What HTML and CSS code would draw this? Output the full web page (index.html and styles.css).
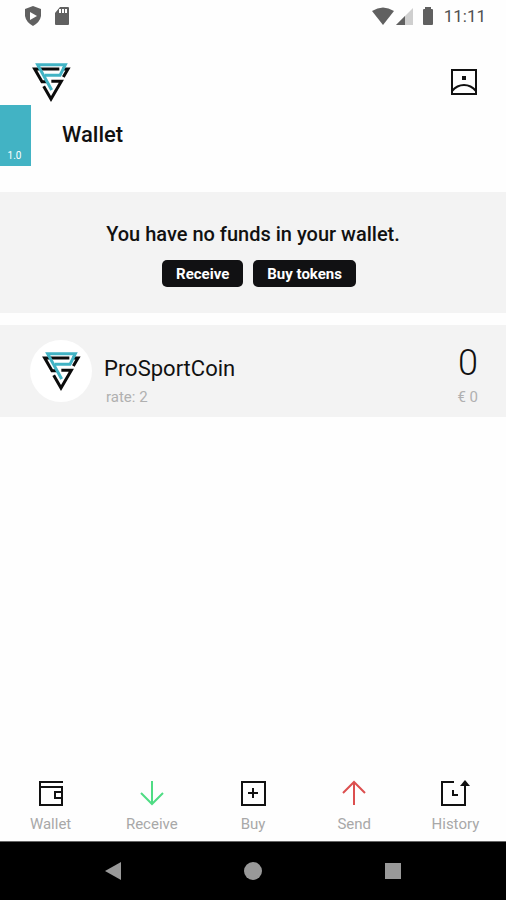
FILE: index.html
```html
<!DOCTYPE html>
<html lang="en">
<head>
  <meta charset="UTF-8">
  <meta name="viewport" content="width=device-width, initial-scale=1">
  <title>Wallet</title>
  <link rel="stylesheet" href="styles.css">
</head>
<body>
  <svg class="defs" aria-hidden="true">
    <symbol id="logo" viewBox="0 0 120 120">
      <g fill="none" stroke-width="9">
        <path stroke="#0b0b0b" d="M85 21H11L33 59H48M94 21H111L97 45M38 73L60 111L91 58H61"/>
        <path stroke="#42b3c4" d="M62 84L20 8H103L87 40H42"/>
      </g>
    </symbol>
  </svg>

  <div class="status-bar">
    <div class="status-icons left">
      <svg width="18" height="20" viewBox="0 0 18 20"><path fill="#606060" fill-rule="evenodd" d="M9 0L17 3V10Q16 16 9 20Q2 16 1 10V3ZM6 6V14L13 10Z"/></svg>
      <svg width="16" height="20" viewBox="0 0 16 20"><path fill="#606060" fill-rule="evenodd" d="M6 1H14Q15 1 15 2V18Q15 19 14 19H2Q1 19 1 18V7ZM5 3V7H7V3ZM8 3V7H10V3ZM11 3V7H13V3Z"/></svg>
    </div>
    <div class="status-icons right">
      <svg width="22" height="18" viewBox="0 0 22 18"><path fill="#606060" d="M0 4Q11 -3 22 4L11 18Z"/></svg>
      <svg width="17" height="18" viewBox="0 0 17 18"><path fill="#cfcfcf" d="M17 1V18H0Z"/><path fill="#606060" d="M9 9V18H0Z"/></svg>
      <svg class="battery" width="12" height="18" viewBox="0 0 12 18"><path fill="#606060" d="M3 0H9V2H10Q11 2 11 3V17Q11 18 10 18H2Q1 18 1 17V3Q1 2 2 2H3Z"/></svg>
      <span class="clock">11:11</span>
    </div>
  </div>

  <header>
    <svg class="logo"><use href="#logo"/></svg>
    <button class="profile-btn" aria-label="Profile">
      <svg width="26" height="26" viewBox="0 0 26 26"><g fill="none" stroke="#111" stroke-width="2"><path d="M1 1H25V25H1Z"/><path d="M1 22Q6 16 13 16T25 22"/></g><path fill="#111" d="M11 7H15V11H11Z"/></svg>
    </button>
  </header>

  <div class="title-row">
    <div class="version">1.0</div>
    <h1>Wallet</h1>
  </div>

  <main>
    <section class="notice">
      <h2>You have no funds in your wallet.</h2>
      <div class="notice-buttons">
        <button>Receive</button>
        <button>Buy tokens</button>
      </div>
    </section>

    <section class="coin">
      <div class="coin-logo"><svg class="logo"><use href="#logo"/></svg></div>
      <div class="coin-info">
        <div class="coin-name">ProSportCoin</div>
        <div class="coin-rate">rate: 2</div>
      </div>
      <div class="coin-balance">
        <div class="amount">0</div>
        <div class="fiat">€ 0</div>
      </div>
    </section>
  </main>

  <nav class="tabs">
    <a href="#wallet">
      <svg width="26" height="26" viewBox="0 0 26 26"><path fill="none" stroke="#111" stroke-width="2" d="M25 2H2V25H24V7H2M24 12H17V18H24"/></svg>
      Wallet
    </a>
    <a href="#receive">
      <svg width="26" height="26" viewBox="0 0 26 26"><path fill="none" stroke="#4fdc84" stroke-width="2" d="M13 1V24M2 13L13 24L24 13"/></svg>
      Receive
    </a>
    <a href="#buy">
      <svg width="26" height="26" viewBox="0 0 26 26"><path fill="none" stroke="#111" stroke-width="2" d="M2 2H25V25H2ZM13 8V18M8 13H18"/></svg>
      Buy
    </a>
    <a href="#send">
      <svg width="26" height="26" viewBox="0 0 26 26"><path fill="none" stroke="#dc4f4f" stroke-width="2" d="M13 25V2M2 13L13 2L24 13"/></svg>
      Send
    </a>
    <a href="#history">
      <svg width="30" height="26" viewBox="0 0 30 26"><path fill="none" stroke="#111" stroke-width="2" d="M14 2H2V25H25V4M13 10V15H18"/><path fill="#111" d="M25 0L30 6H20Z"/></svg>
      History
    </a>
  </nav>

  <div class="system-nav">
    <button aria-label="Back"><svg width="18" height="18" viewBox="0 0 18 18"><path fill="#999" d="M1 9L17 0V18Z"/></svg></button>
    <button aria-label="Home"><svg width="18" height="18" viewBox="0 0 18 18"><circle cx="9" cy="9" r="9" fill="#999"/></svg></button>
    <button aria-label="Overview"><svg width="18" height="18" viewBox="0 0 18 18"><path fill="#999" d="M1 1H17V17H1Z"/></svg></button>
  </div>
</body>
</html>
```

FILE: styles.css
```css
* {
  box-sizing: border-box;
}

body {
  margin: 0;
  min-height: 100vh;
  display: flex;
  flex-direction: column;
  font-family: Roboto, sans-serif;
  background-color: #fefefe;
  color: #111;
}

svg {
  display: block;
}

.defs {
  position: absolute;
  width: 0;
  height: 0;
}

button {
  border: none;
  padding: 0;
  background: none;
  font-family: inherit;
  cursor: pointer;
}

.status-bar {
  display: flex;
  justify-content: space-between;
  height: 32px;
  padding: 0 20px 0 24px;
}

.status-icons {
  display: flex;
  align-items: center;
}

.status-icons.left {
  gap: 12px;
}

.status-icons.right {
  gap: 2px;
}

.battery {
  margin-left: 7px;
}

.clock {
  margin-left: 8px;
  font-size: 17px;
  color: #505050;
}

header {
  display: flex;
  justify-content: space-between;
  align-items: center;
  padding: 30px 29px 3px 31px;
}

.logo {
  width: 40px;
  height: 40px;
}

.title-row {
  display: flex;
  align-items: flex-start;
}

.version {
  display: flex;
  align-items: flex-end;
  justify-content: center;
  width: 31px;
  height: 61px;
  padding: 0 2px 5px 0;
  background-color: #42b3c4;
  color: #fff;
  font-size: 10px;
}

h1 {
  margin: 16px 0 0 31px;
  font-size: 22px;
  line-height: 28px;
  font-weight: 500;
}

main {
  flex: 1;
  padding-top: 26px;
}

.notice {
  padding: 29px 20px 26px;
  margin-bottom: 12px;
  background-color: #f3f3f3;
  text-align: center;
}

h2 {
  margin: 0 0 13px;
  font-size: 20px;
  line-height: 26px;
  font-weight: 500;
}

.notice-buttons {
  display: flex;
  justify-content: center;
  gap: 10px;
  padding-left: 12px;
}

.notice-buttons button {
  height: 27px;
  padding: 0 14px;
  border-radius: 5px;
  background-color: #111113;
  color: #fff;
  font-size: 15px;
  font-weight: 700;
}

.coin {
  display: flex;
  align-items: flex-start;
  padding: 15px 28px 11px 30px;
  background-color: #f3f3f3;
}

.coin-logo {
  display: flex;
  align-items: center;
  justify-content: center;
  width: 62px;
  height: 62px;
  border-radius: 50%;
  background-color: #fff;
}

.coin-info {
  flex: 1;
  padding: 15px 0 0 12px;
}

.coin-name {
  font-size: 22px;
  line-height: 28px;
}

.coin-rate,
.fiat {
  font-size: 15px;
  line-height: 18px;
  color: #b0b0b0;
}

.coin-rate {
  padding: 5px 0 0 2px;
}

.coin-balance {
  padding-top: 9px;
  text-align: right;
}

.amount {
  font-size: 36px;
  font-weight: 300;
  line-height: 28px;
  padding-bottom: 11px;
}

.tabs {
  display: grid;
  grid-template-columns: repeat(5, 1fr);
  padding-bottom: 8px;
}

.tabs a {
  display: flex;
  flex-direction: column;
  align-items: center;
  gap: 9px;
  color: #a8a8a8;
  font-size: 15px;
  line-height: 18px;
  text-decoration: none;
}

.system-nav {
  display: flex;
  justify-content: center;
  align-items: center;
  gap: 122px;
  height: 59px;
  border-top: 1px solid #666;
  background-color: #000;
}
```
